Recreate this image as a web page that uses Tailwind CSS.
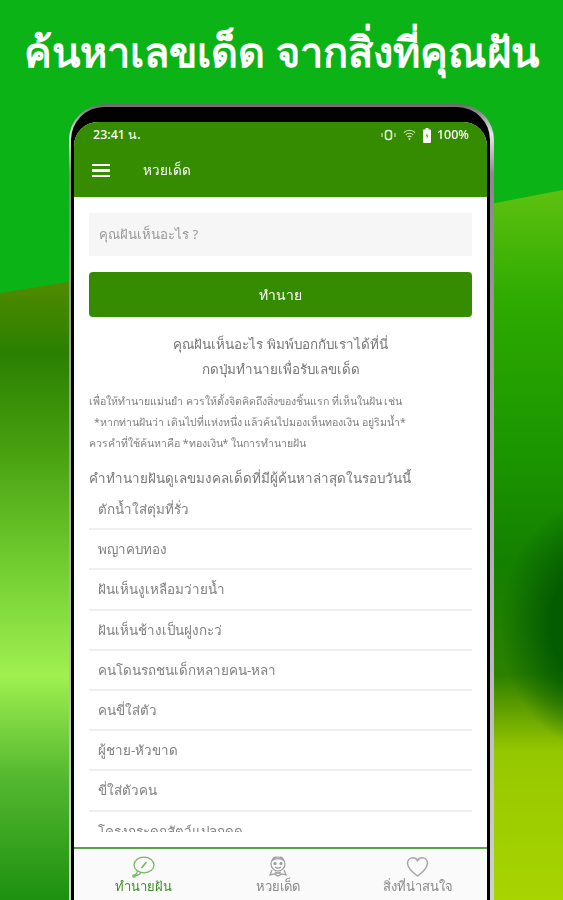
<!DOCTYPE html>
<html lang="th">
<head>
<meta charset="utf-8">
<script src="https://cdn.jsdelivr.net/npm/@tailwindcss/browser@4"></script>
</head>
<body class="m-0">
<div class="relative w-[563px] h-[900px] overflow-hidden font-['Noto_Sans','Roboto',sans-serif]">
  <svg class="absolute inset-0" width="563" height="900" viewBox="0 0 563 900" aria-hidden="true">
    <defs>
      <linearGradient id="lg" gradientUnits="userSpaceOnUse" x1="0" y1="285" x2="0" y2="900">
        <stop offset="0" stop-color="#4f8a00"/><stop offset="0.11" stop-color="#2a8000"/><stop offset="0.27" stop-color="#48a010"/><stop offset="0.45" stop-color="#70cc30"/><stop offset="0.635" stop-color="#a0f050"/><stop offset="0.8" stop-color="#55b830"/><stop offset="1" stop-color="#1d9010"/>
      </linearGradient>
      <linearGradient id="rg" gradientUnits="userSpaceOnUse" x1="0" y1="195" x2="0" y2="900">
        <stop offset="0" stop-color="#5cc010"/><stop offset="0.15" stop-color="#2eaa00"/><stop offset="0.36" stop-color="#1c9600"/><stop offset="0.52" stop-color="#148000"/><stop offset="0.68" stop-color="#2c8000"/><stop offset="0.725" stop-color="#5c9c00"/><stop offset="0.79" stop-color="#96c800"/><stop offset="1" stop-color="#a8d400"/>
      </linearGradient>
      <radialGradient id="rd" gradientUnits="userSpaceOnUse" cx="0" cy="0" r="1" gradientTransform="translate(600 625) scale(100 125)">
        <stop offset="0" stop-color="#045c00"/><stop offset="0.5" stop-color="#045c00"/><stop offset="1" stop-color="#045c00" stop-opacity="0"/>
      </radialGradient>
    </defs>
    <rect width="563" height="900" fill="#0bb316"/>
    <path d="M0 293 L80 280 L80 900 L0 900Z" fill="url(#lg)"/>
    <path d="M480 206 L563 190 L563 900 L480 900Z" fill="url(#rg)"/>
    <rect x="480" y="500" width="83" height="250" fill="url(#rd)"/>
  </svg>

  <h1 class="relative text-center text-white font-bold text-[41.5px] leading-[50px] pt-[26px] whitespace-nowrap">ค้นหาเลขเด็ด จากสิ่งที่คุณฝัน</h1>

  <div class="absolute left-[69px] top-[104px] w-[425px] h-[796px] rounded-t-[36px] pl-[2px] pr-[4px] pt-[3px] bg-[linear-gradient(180deg,#6a6a6a_0px,#e8e8e8_30px,#8a8a8a_70px,#d0d0d0_100%)]">
    <div class="h-full rounded-t-[33px] bg-black px-[3px] pt-[15px] blur-[0.5px]">
      <div class="h-full rounded-t-[24px] overflow-hidden bg-white flex flex-col">

        <header class="h-[75px] shrink-0 bg-[#368c00] text-white flex flex-col">
          <div class="h-[24px] mt-[1px] flex items-center justify-between pl-[19px] pr-[18px] text-[12.5px] font-medium">
            <span>23:41 น.</span>
            <div class="flex items-center gap-[7px]">
              <svg width="15" height="12" viewBox="0 0 15 12" fill="none" stroke="#e8f4dc" stroke-width="1.6"><rect x="4.5" y="1.5" width="6" height="9" rx="2.5"/><path d="M1 4v4M14 4v4" stroke-width="1"/></svg>
              <svg width="13" height="12" viewBox="0 0 13 12" fill="none" stroke="#cfe6b8" stroke-width="1.1"><path d="M0.8 3.6a8 8 0 0 1 11.4 0M2.7 5.8a5.3 5.3 0 0 1 7.6 0M4.6 8a2.6 2.6 0 0 1 3.8 0"/><circle cx="6.5" cy="10" r="0.9" fill="#cfe6b8" stroke="none"/></svg>
              <svg width="8" height="15" viewBox="0 0 8 15"><path d="M2.5 0h3v1.5H7a1 1 0 0 1 1 1V14a1 1 0 0 1-1 1H1a1 1 0 0 1-1-1V2.500a1 1 0 0 1 1-1h1.500z" fill="#fff"/><path d="M4.400 5L2.800 8.300H4L3.600 11 5.300 7.600H4.100z" fill="#368c00"/></svg>
              <span class="-ml-[1px]">100%</span>
            </div>
          </div>
          <div class="flex-1 flex items-center pl-[18px] pb-[3px]">
            <div class="w-[18px] flex flex-col gap-[3px]">
              <span class="h-[2.500px] bg-white"></span>
              <span class="h-[2.500px] bg-white"></span>
              <span class="h-[2.500px] bg-white"></span>
            </div>
            <span class="ml-[33px] text-[13.5px] font-medium">หวยเด็ด</span>
          </div>
        </header>

        <main class="flex-1 min-h-0 px-[15px] pt-[16px] pb-[15px] flex flex-col text-[#777]">
          <div class="h-[43px] shrink-0 bg-[#f6f6f6] pl-[10px] flex items-center text-[13.2px] text-[#9a9a9a]">คุณฝันเห็นอะไร ?</div>
          <div class="h-[45px] shrink-0 mt-[16px] rounded-[4px] bg-[#368c00] text-white flex items-center justify-center text-[14px]">ทำนาย</div>
          <div class="mt-[15px] shrink-0 text-center text-[13.4px] leading-[25px]">
            <p>คุณฝันเห็นอะไร พิมพ์บอกกับเราได้ที่นี่</p>
            <p>กดปุ่มทำนายเพื่อรับเลขเด็ด</p>
          </div>
          <div class="mt-[9px] shrink-0 text-[10.6px] leading-[21px] text-[#808080] whitespace-nowrap">
            <p>เพื่อให้ทำนายแม่นยำ ควรให้ตั้งจิตคิดถึงสิ่งของชิ้นแรก ที่เห็นในฝัน เช่น</p>
            <p class="pl-[5px]">*หากท่านฝันว่า เดินไปที่แห่งหนึ่ง แล้วค้นไปมองเห็นทองเงิน อยู่ริมน้ำ*</p>
            <p>ควรคำที่ใช้ค้นหาคือ *ทองเงิน* ในการทำนายฝัน</p>
          </div>
          <h2 class="mt-[12px] shrink-0 text-[13.4px] leading-[24px] whitespace-nowrap">คำทำนายฝันดูเลขมงคลเด็ดที่มีผู้ค้นหาล่าสุดในรอบวันนี้</h2>
          <ul class="flex-1 min-h-0 overflow-hidden text-[13.4px] text-[#808080]">
            <li class="h-[40.200px] border-b-2 border-[#efefef] pl-[9px] flex items-center">ตักน้ำใส่ตุ่มที่รั่ว</li>
            <li class="h-[40.200px] border-b-2 border-[#efefef] pl-[9px] flex items-center">พญาคบทอง</li>
            <li class="h-[40.200px] border-b-2 border-[#efefef] pl-[9px] flex items-center">ฝันเห็นงูเหลือมว่ายน้ำ</li>
            <li class="h-[40.200px] border-b-2 border-[#efefef] pl-[9px] flex items-center">ฝันเห็นช้างเป็นฝูงกะว่</li>
            <li class="h-[40.200px] border-b-2 border-[#efefef] pl-[9px] flex items-center">คนโดนรถชนเด็กหลายคน-หลา</li>
            <li class="h-[40.200px] border-b-2 border-[#efefef] pl-[9px] flex items-center">คนขี่ใส่ตัว</li>
            <li class="h-[40.200px] border-b-2 border-[#efefef] pl-[9px] flex items-center">ผู้ชาย-หัวขาด</li>
            <li class="h-[40.200px] border-b-2 border-[#efefef] pl-[9px] flex items-center">ขี่ใส่ตัวคน</li>
            <li class="h-[40.200px] border-b-2 border-[#efefef] pl-[9px] flex items-center">โครงกระดูกสัตว์แปลกดด</li>
          </ul>
        </main>

        <nav class="h-[53px] shrink-0 border-t-2 border-[#5aa24a] bg-[#fafafa] grid grid-cols-[132px_142px_139px] text-[13px] text-[#8a8a8a]">
          <a class="flex flex-col items-center pt-[7px] pl-[6px] text-[#3f8f2a] font-medium">
            <svg width="24" height="22" viewBox="0 0 24 22" fill="none" stroke="#74b864" stroke-width="1.300">
              <ellipse cx="13" cy="9" rx="10" ry="7.800"/>
              <path d="M6.500 15c-.3 2-1.500 3.500-3 4.500 2.500.3 5-.6 6.500-3"/>
              <circle cx="3" cy="20" r="1.200"/>
              <path d="M10.500 12l5-6" stroke-width="1.600"/>
            </svg>
            <span class="leading-[18px] -mt-[1px]">ทำนายฝัน</span>
          </a>
          <a class="flex flex-col items-center pt-[7px] pl-[2px]">
            <svg width="22" height="22" viewBox="0 0 22 22" fill="none" stroke="#9a9a9a" stroke-width="1.200">
              <circle cx="11" cy="8" r="7"/>
              <path d="M5 4.500c3-2.500 9-2.500 12 0M6 2.800c1-1.500 2-2 3-1.500M16 2.800c-1-1.500-2-2-3-1.500"/>
              <circle cx="8" cy="7.500" r="1" fill="#9a9a9a"/><circle cx="14" cy="7.500" r="1" fill="#9a9a9a"/>
              <path d="M8 11c2 1.500 4 1.500 6 0"/>
              <path d="M5 14l-2 5 4-1 4 2 4-2 4 1-2-5M8 16l6 2M14 16l-6 2"/>
            </svg>
            <span class="leading-[18px] -mt-[1px]">หวยเด็ด</span>
          </a>
          <a class="flex flex-col items-center pt-[7px]">
            <svg width="23" height="22" viewBox="0 0 23 22" fill="none" stroke="#a8a8a8" stroke-width="1.500">
              <path d="M11.500 20C4 14.500 1.500 11 1.500 7.200 1.500 4 4 1.800 6.800 1.800c2 0 3.700 1 4.700 2.900 1-1.900 2.700-2.900 4.700-2.900 2.800 0 5.300 2.200 5.300 5.400 0 3.800-2.500 7.300-10 12.800z"/>
            </svg>
            <span class="leading-[18px] -mt-[1px]">สิ่งที่น่าสนใจ</span>
          </a>
        </nav>
      </div>
    </div>
  </div>
</div>
</body>
</html>
